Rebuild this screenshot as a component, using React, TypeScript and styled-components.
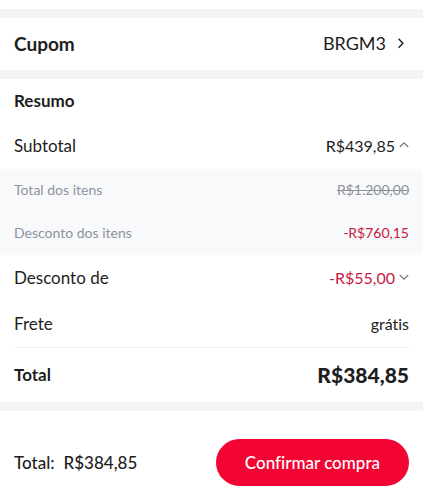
import React from 'react';
import styled, { createGlobalStyle } from 'styled-components';

const GlobalStyle = createGlobalStyle`
  * {
    box-sizing: border-box;
  }

  body {
    margin: 0;
    background-color: #ffffff;
    color: #1e1e1e;
    font-family: Lato, 'Liberation Sans', sans-serif;
    font-variant-ligatures: none;
  }
`;

const Page = styled.main`
  display: flex;
  flex-direction: column;
  padding-top: 9px;
`;

const Divider = styled.div`
  height: 9px;
  background-color: #f4f4f4;
`;

const CouponButton = styled.button`
  display: flex;
  align-items: center;
  justify-content: space-between;
  height: 52px;
  padding: 0 14px 2px;
  border: 0;
  background: none;
  color: inherit;
  font: inherit;
  font-size: 18px;
  cursor: pointer;
`;

const CouponLabel = styled.span`
  font-size: 19px;
  font-weight: 700;
`;

const CouponCode = styled.span`
  display: flex;
  align-items: center;
  gap: 9px;
  padding-right: 2px;
`;

const Summary = styled.section`
  padding-top: 7px;
`;

const SummaryTitle = styled.h2`
  margin: 0 0 7px;
  padding: 0 14px;
  font-size: 17px;
  line-height: 30px;
`;

const Row = styled.div<{ $height?: number }>`
  display: flex;
  align-items: center;
  justify-content: space-between;
  height: ${props => props.$height ?? 46}px;
  padding: 0 14px 2px;
  font-size: 16px;
`;

const Label = styled.span`
  font-size: 17px;
`;

const Details = styled.div`
  background-color: #f8f9fb;
  color: #8e919e;

  ${Row} {
    font-size: 14px;
  }
`;

const Discount = styled.span`
  color: #c61a40;
`;

const ExpandButton = styled.button<{ $red?: boolean }>`
  display: flex;
  align-items: center;
  gap: 4px;
  padding: 0;
  border: 0;
  background: none;
  color: ${props => props.$red ? '#c61a40' : 'inherit'};
  font: inherit;
  font-variant-ligatures: none;
  cursor: pointer;
`;

const TotalRow = styled(Row)`
  margin: 0 14px;
  padding: 0 0 2px;
  border-top: 1px solid #f3f3f3;
  font-weight: 700;
`;

const TotalValue = styled.span`
  font-size: 21px;
  font-weight: 900;
`;

const Footer = styled.footer`
  display: flex;
  align-items: center;
  justify-content: space-between;
  padding: 28px 14px 14px;
  font-size: 17px;
  font-weight: 500;
`;

const FooterTotal = styled.div`
  display: flex;
  gap: 9px;
`;

const ConfirmButton = styled.button`
  height: 47px;
  padding: 0 29px;
  border: 0;
  border-radius: 24px;
  background-color: #f20532;
  color: #ffffff;
  font: inherit;
  font-variant-ligatures: none;
  cursor: pointer;
`;

const Chevron = ({ d, size, color }: { d: string; size: number; color: string }) => (
  <svg
    width={size}
    height={size}
    viewBox="0 0 10 10"
    fill="none"
    stroke={color}
    strokeWidth="1.2"
    aria-hidden="true"
  >
    <path d={d} />
  </svg>
);

export default function App() {
  return (
    <>
      <GlobalStyle />
      <Page>
        <Divider />
        <CouponButton type="button">
          <CouponLabel>Cupom</CouponLabel>
          <CouponCode>
            BRGM3
            <Chevron d="M3 1.5L6.6 5.2L3 8.9" size={12} color="#222222" />
          </CouponCode>
        </CouponButton>
        <Divider />
        <Summary>
          <SummaryTitle>Resumo</SummaryTitle>
          <Row>
            <Label>Subtotal</Label>
            <ExpandButton type="button">
              R$439,85
              <Chevron d="M0.8 7L5 2.8L9.2 7" size={10} color="#777777" />
            </ExpandButton>
          </Row>
          <Details>
            <Row $height={43}>
              <span>Total dos itens</span>
              <s>R$1.200,00</s>
            </Row>
            <Row $height={43}>
              <span>Desconto dos itens</span>
              <Discount>-R$760,15</Discount>
            </Row>
          </Details>
          <Row>
            <Label>Desconto de</Label>
            <ExpandButton type="button" $red>
              -R$55,00
              <Chevron d="M0.8 3L5 7.2L9.2 3" size={10} color="#777777" />
            </ExpandButton>
          </Row>
          <Row>
            <Label>Frete</Label>
            <span>grátis</span>
          </Row>
          <TotalRow $height={55}>
            <Label>Total</Label>
            <TotalValue>R$384,85</TotalValue>
          </TotalRow>
        </Summary>
        <Divider />
        <Footer>
          <FooterTotal>
            <span>Total:</span>
            <span>R$384,85</span>
          </FooterTotal>
          <ConfirmButton type="button">Confirmar compra</ConfirmButton>
        </Footer>
      </Page>
    </>
  );
}
